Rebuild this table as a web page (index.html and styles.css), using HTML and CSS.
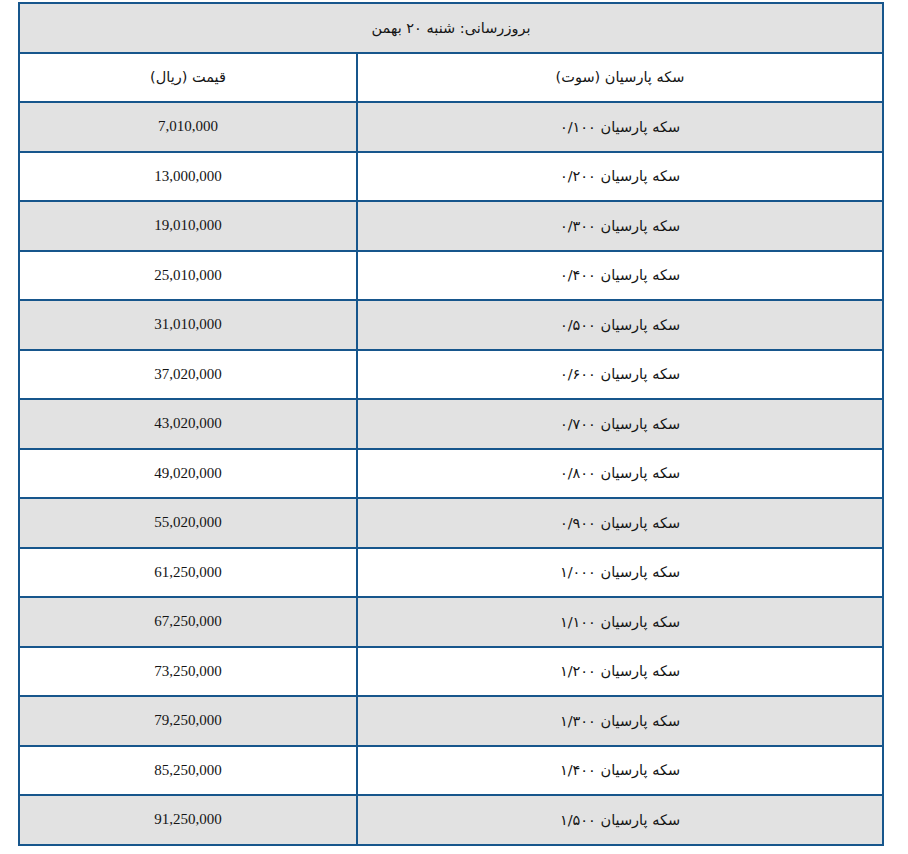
FILE: index.html
```html
<!DOCTYPE html>
<html lang="fa">
<head>
<meta charset="utf-8">
<link rel="stylesheet" href="styles.css">
</head>
<body>
<table class="prices" dir="rtl">
  <colgroup><col class="col-name"><col class="col-price"></colgroup>
  <tr class="gray"><td class="title" colspan="2">بروزرسانی: شنبه ۲۰ بهمن</td></tr>
  <tr><td class="name">سکه پارسیان (سوت)</td><td class="name">قیمت (ریال)</td></tr>
  <tr class="gray"><td class="name">سکه پارسیان ۰/۱۰۰</td><td class="num">7,010,000</td></tr>
  <tr><td class="name">سکه پارسیان ۰/۲۰۰</td><td class="num">13,000,000</td></tr>
  <tr class="gray"><td class="name">سکه پارسیان ۰/۳۰۰</td><td class="num">19,010,000</td></tr>
  <tr><td class="name">سکه پارسیان ۰/۴۰۰</td><td class="num">25,010,000</td></tr>
  <tr class="gray"><td class="name">سکه پارسیان ۰/۵۰۰</td><td class="num">31,010,000</td></tr>
  <tr><td class="name">سکه پارسیان ۰/۶۰۰</td><td class="num">37,020,000</td></tr>
  <tr class="gray"><td class="name">سکه پارسیان ۰/۷۰۰</td><td class="num">43,020,000</td></tr>
  <tr><td class="name">سکه پارسیان ۰/۸۰۰</td><td class="num">49,020,000</td></tr>
  <tr class="gray"><td class="name">سکه پارسیان ۰/۹۰۰</td><td class="num">55,020,000</td></tr>
  <tr><td class="name">سکه پارسیان ۱/۰۰۰</td><td class="num">61,250,000</td></tr>
  <tr class="gray"><td class="name">سکه پارسیان ۱/۱۰۰</td><td class="num">67,250,000</td></tr>
  <tr><td class="name">سکه پارسیان ۱/۲۰۰</td><td class="num">73,250,000</td></tr>
  <tr class="gray"><td class="name">سکه پارسیان ۱/۳۰۰</td><td class="num">79,250,000</td></tr>
  <tr><td class="name">سکه پارسیان ۱/۴۰۰</td><td class="num">85,250,000</td></tr>
  <tr class="gray"><td class="name">سکه پارسیان ۱/۵۰۰</td><td class="num">91,250,000</td></tr>
</table>
</body>
</html>
```
FILE: styles.css
```css
html, body {
  margin: 0;
  padding: 0;
  background: #ffffff;
}
body {
  padding: 2px 0 0 18px;
}
.prices {
  width: 866px;
  border-collapse: collapse;
  table-layout: fixed;
  color: #151515;
}
.col-name {
  width: 526px;
}
.col-price {
  width: 338px;
}
.prices td {
  border: 2px solid #17568c;
  height: 47.5px;
  padding: 0;
  text-align: center;
  vertical-align: middle;
}
.prices tr.gray td {
  background: #e2e2e2;
}
.prices td.name, .prices td.title {
  font-family: "DejaVu Sans", "Noto Sans", sans-serif;
  font-size: 14.5px;
}
.prices td.num {
  font-family: "Liberation Serif", serif;
  font-size: 15px;
}
```
